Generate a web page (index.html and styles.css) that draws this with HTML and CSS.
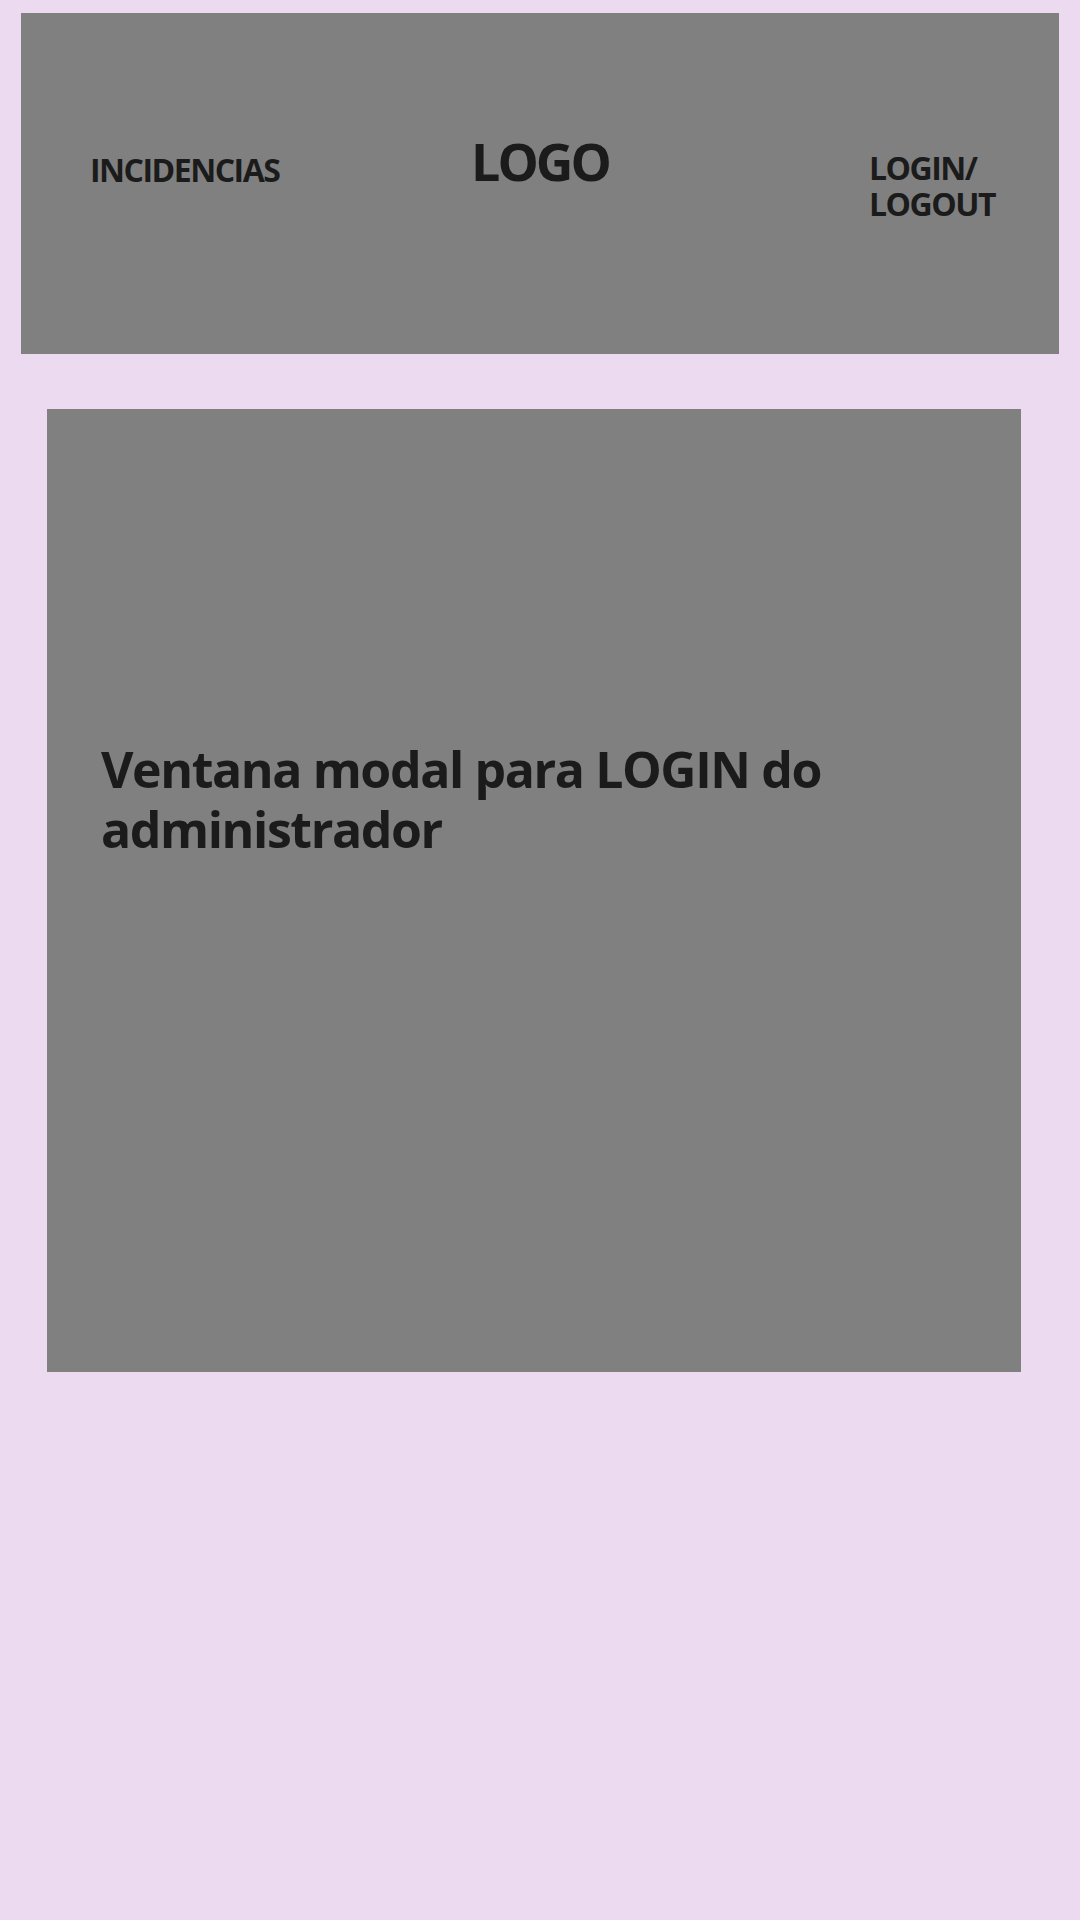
FILE: index.html
```html
<!DOCTYPE html>
<html lang="es">
<head>
<meta charset="utf-8">
<title>Incidencias</title>
<link rel="stylesheet" href="styles.css">
</head>
<body>
<header class="header">
  <a class="nav-link nav-left">INCIDENCIAS</a>
  <div class="logo">LOGO</div>
  <a class="nav-link nav-right">LOGIN/<br>LOGOUT</a>
</header>
<main class="modal">
  <h1 class="modal-title">Ventana modal para LOGIN do administrador</h1>
</main>
</body>
</html>
```
FILE: styles.css
```css
html, body {
  margin: 0;
  padding: 0;
}
body {
  background: #ebdaf0;
  min-height: 1920px;
  font-family: "Open Sans", "Noto Sans", sans-serif;
  color: #1b1b1b;
  padding: 13px 21px 0 21px;
  box-sizing: border-box;
}
.header {
  background: #808080;
  height: 341px;
  display: grid;
  grid-template-columns: 1fr auto 1fr;
  align-items: center;
  padding: 0 65px;
  box-sizing: border-box;
}
.nav-link {
  font-weight: 700;
  font-size: 32px;
  line-height: 36px;
  letter-spacing: -1.5px;
}
.nav-left {
  justify-self: start;
  margin-left: 4px;
  margin-bottom: 28px;
}
.nav-right {
  justify-self: end;
  width: 125px;
  margin-top: 4px;
}
.logo {
  font-weight: 700;
  font-size: 52px;
  line-height: 60px;
  letter-spacing: -3px;
  margin-bottom: 45px;
}
.modal {
  background: #808080;
  margin: 55px 38px 0 26px;
  height: 963px;
  box-sizing: border-box;
  padding: 330px 54px 0 54px;
}
.modal-title {
  margin: 0;
  font-weight: 700;
  font-size: 50px;
  line-height: 60px;
  letter-spacing: -1.4px;
}
```
